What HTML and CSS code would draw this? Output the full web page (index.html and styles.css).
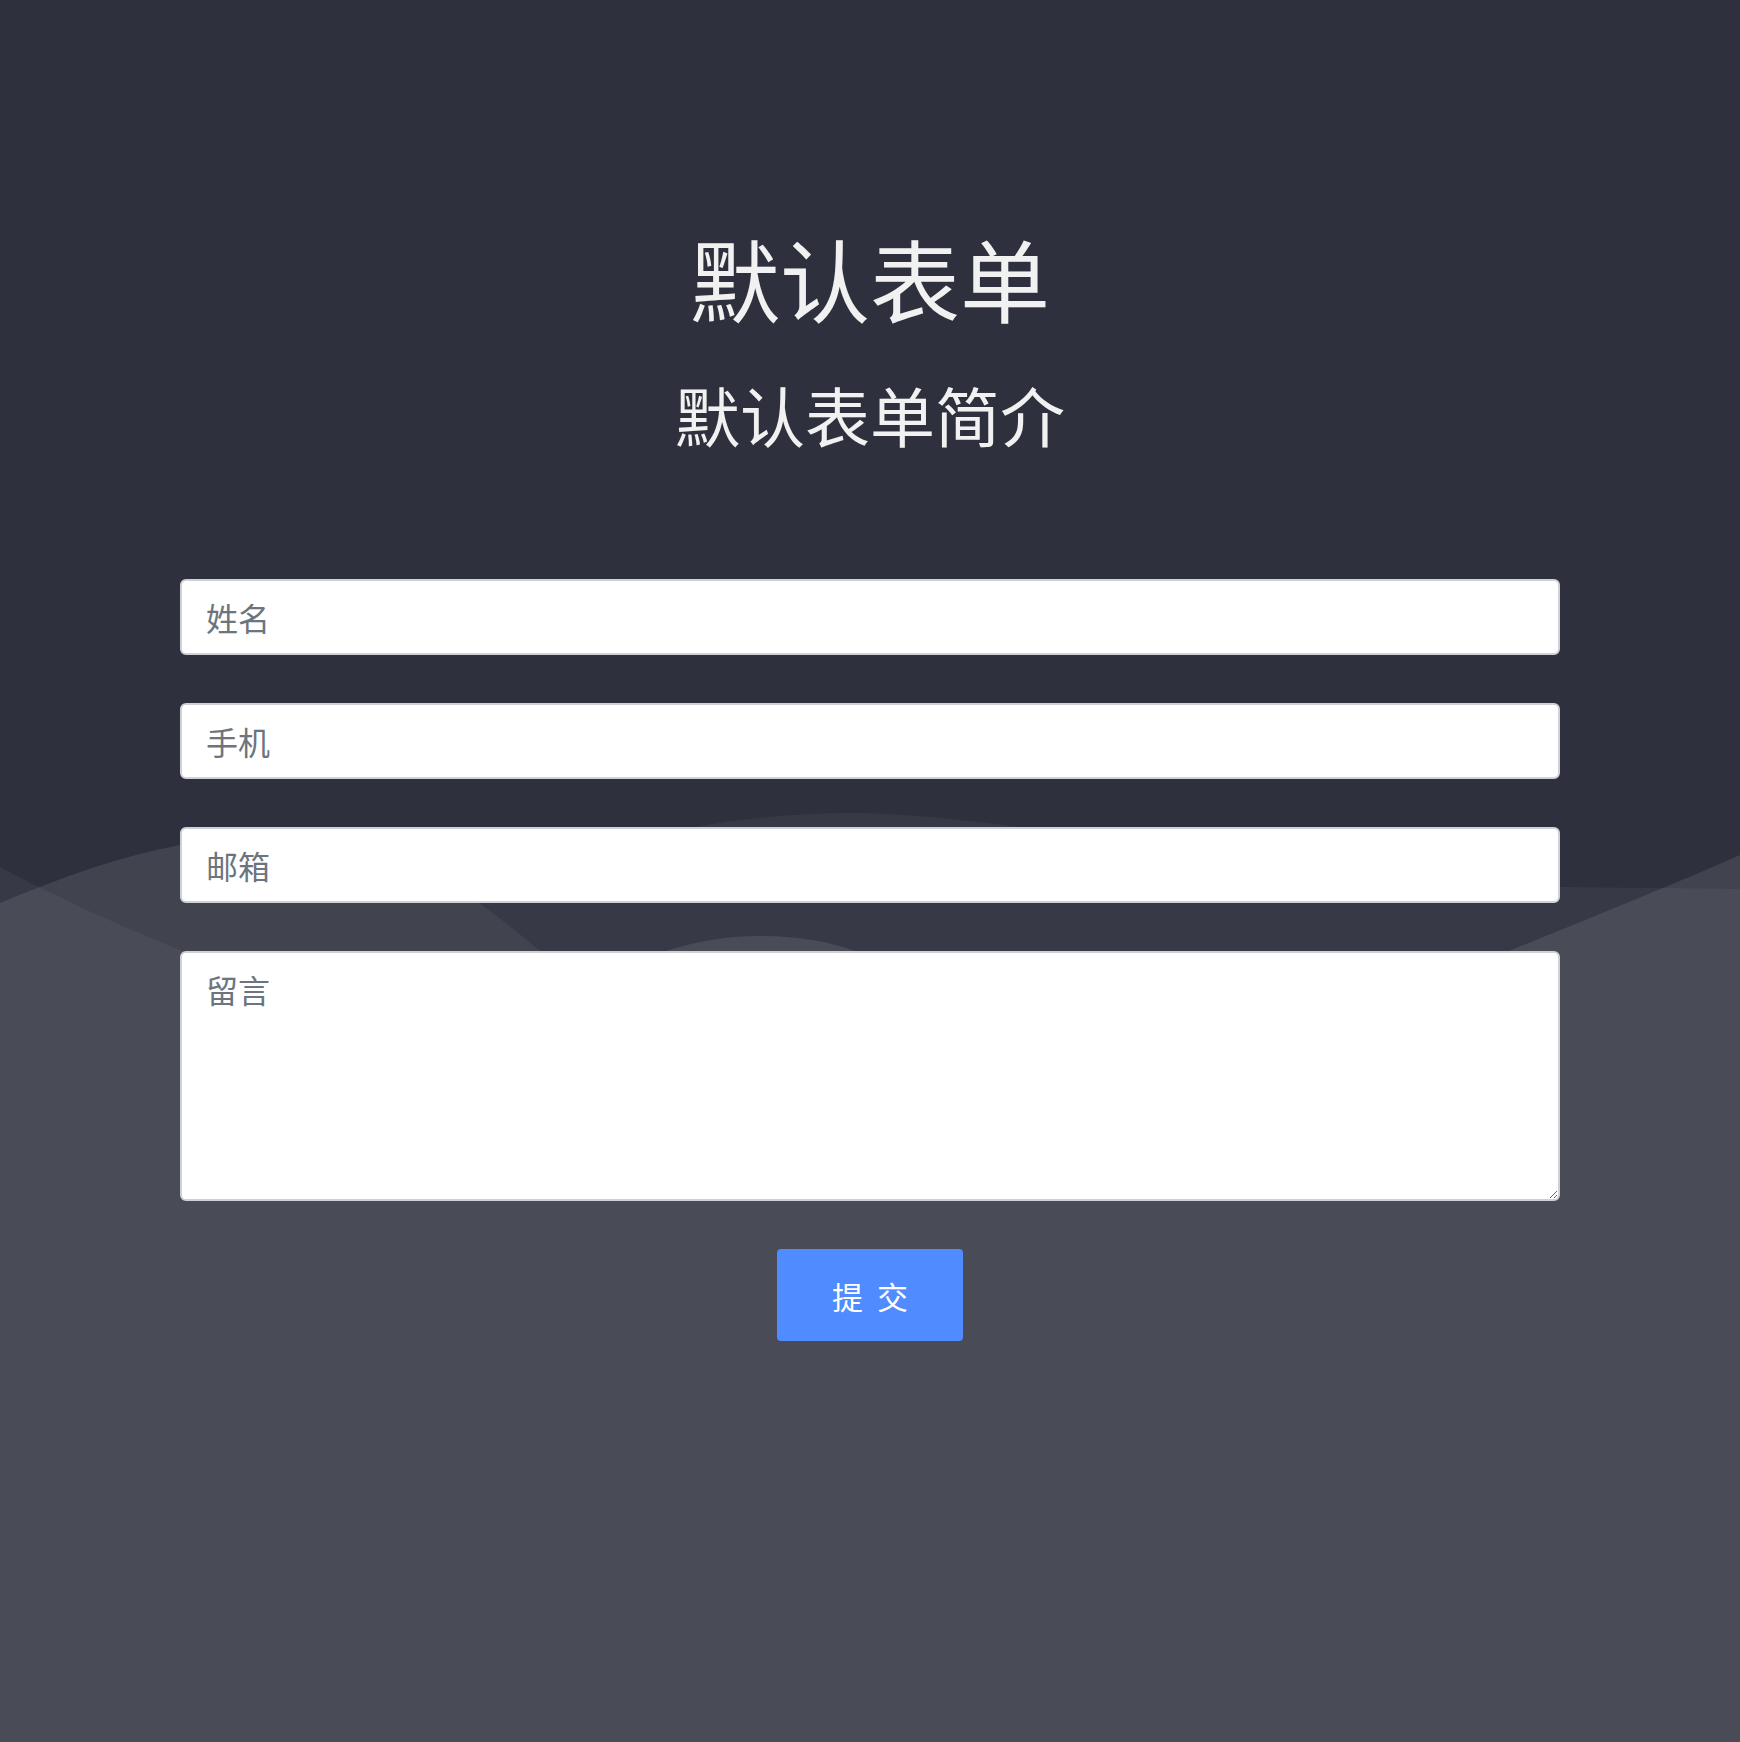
FILE: index.html
```html
<!DOCTYPE html>
<html lang="zh-CN">
<head>
<meta charset="utf-8">
<title>默认表单</title>
<link rel="stylesheet" href="styles.css">
</head>
<body>
<div class="page">
  <svg class="waves" viewBox="0 0 1740 1742" preserveAspectRatio="none" aria-hidden="true">
    <path class="wave-z" d="M0,867 C40,889 110,922 180,950 C300,1000 500,1000 539,950 C520,934 500,918 479,903 C560,850 700,815 844,813 C1000,811 1300,880 1560,887 L1740,889 L1740,1742 L0,1742 Z"/>
    <path class="wave-w" d="M0,903 C60,878 120,856 180,845 C250,823 380,840 479,903 C500,918 520,934 539,950 C570,990 630,990 666,951 C700,940 730,936 761,936 C800,936 830,942 855,951 C1000,1010 1400,1010 1509,951 C1590,918 1670,886 1740,855 L1740,1742 L0,1742 Z"/>
  </svg>
  <main class="content">
    <h1 class="title">默认表单</h1>
    <h2 class="subtitle">默认表单简介</h2>
    <form class="form">
      <input class="field" type="text" placeholder="姓名">
      <input class="field" type="text" placeholder="手机">
      <input class="field" type="text" placeholder="邮箱">
      <textarea class="field field-area" placeholder="留言"></textarea>
      <div class="actions">
        <button class="submit" type="button">提交</button>
      </div>
    </form>
  </main>
</div>
</body>
</html>
```

FILE: styles.css
```css
html, body {
  margin: 0;
  padding: 0;
}

body {
  background: #2e313d;
  font-family: "Noto Sans CJK SC", "Noto Sans", sans-serif;
}

.page {
  position: relative;
  min-height: 1742px;
  overflow: hidden;
}

.waves {
  position: absolute;
  left: 0;
  top: 0;
  width: 100%;
  height: 1742px;
  z-index: 0;
}

.wave-z {
  fill: rgba(255, 255, 255, 0.048);
}

.wave-w {
  fill: rgba(255, 255, 255, 0.095);
}

.content {
  position: relative;
  z-index: 1;
  display: flex;
  flex-direction: column;
  align-items: center;
  padding-top: 223px;
}

.title {
  margin: 0;
  font-size: 90px;
  line-height: 108px;
  font-weight: 400;
  color: #f1f1f1;
}

.subtitle {
  margin: 44px 0 0;
  font-size: 65px;
  line-height: 78px;
  font-weight: 400;
  color: #f1f1f1;
}

.form {
  margin-top: 126px;
  width: 1380px;
  display: flex;
  flex-direction: column;
  gap: 48px;
}

.field {
  display: block;
  box-sizing: border-box;
  width: 100%;
  height: 76px;
  margin: 0;
  padding: 0 24px;
  border: 2px solid #cdd1d8;
  border-radius: 6px;
  background: #ffffff;
  font-family: "Noto Sans CJK SC", "Noto Sans", sans-serif;
  font-size: 32px;
  color: #495057;
  outline: none;
}

.field::placeholder {
  color: #6c757d;
  opacity: 1;
}

.field-area {
  height: 250px;
  padding-top: 12px;
  line-height: 48px;
  resize: vertical;
}

.actions {
  display: flex;
  justify-content: center;
}

.submit {
  width: 186px;
  height: 92px;
  border: none;
  border-radius: 4px;
  background: #508bff;
  color: #ffffff;
  font-family: "Noto Sans CJK SC", "Noto Sans", sans-serif;
  font-size: 31px;
  letter-spacing: 14px;
  padding: 0 0 0 14px;
  cursor: pointer;
}
```
